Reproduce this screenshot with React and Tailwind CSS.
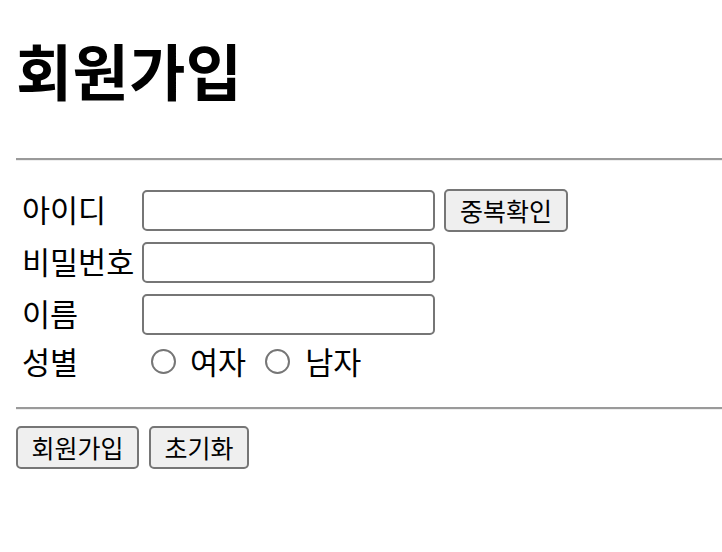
export default function App() {
  const font = { fontFamily: '"Noto Sans CJK KR", "Noto Sans", sans-serif' };
  const inputCls =
    "w-[293px] h-[41px] rounded-[5px] border-2 border-[#767676] bg-white px-2 text-[25px] outline-none";
  const btnCls =
    "h-[43px] rounded-[5px] border-2 border-[#767676] bg-[#efefef] text-[25px] leading-none text-black";

  const rows = [
    { label: "아이디", extra: true },
    { label: "비밀번호" },
    { label: "이름" },
  ];

  return (
    <div className="min-h-[552px] w-[722px] overflow-hidden bg-white text-black" style={font}>
      <div className="pl-4 pt-[28px]">
        <h1 className="text-[61px] font-bold leading-[84px] tracking-[0.5px]">회원가입</h1>
        <hr className="mt-[46px] h-[3px] border-0 border-t-2 border-[#9a9a9a] bg-[#eeeeee]" />
        <div className="mt-[28px] flex flex-col gap-[10px]">
          {rows.map((r) => (
            <div key={r.label} className="flex h-[42px] items-center">
              <div className="w-[126px] pl-[6px] pb-[2px] text-[30.5px] leading-none">{r.label}</div>
              <input className={inputCls} />
              {r.extra ? (
                <button className={btnCls + " ml-[9px] w-[124px]"}>중복확인</button>
              ) : null}
            </div>
          ))}
          <div className="flex h-[32px] items-center">
            <div className="w-[135px] pl-[6px] text-[30.5px] leading-none">성별</div>
            <span className="h-[25px] w-[25px] rounded-full border-2 border-[#767676]" />
            <span className="ml-[14px] text-[30.5px] leading-none">여자</span>
            <span className="ml-[19px] h-[25px] w-[25px] rounded-full border-2 border-[#767676]" />
            <span className="ml-[15px] text-[30.5px] leading-none">남자</span>
          </div>
        </div>
        <hr className="mt-[30px] h-[3px] border-0 border-t-2 border-[#9a9a9a] bg-[#eeeeee]" />
        <div className="mt-[16px] flex gap-[10px]">
          <button className={btnCls + " w-[123px]"}>회원가입</button>
          <button className={btnCls + " w-[100px]"}>초기화</button>
        </div>
      </div>
    </div>
  );
}
